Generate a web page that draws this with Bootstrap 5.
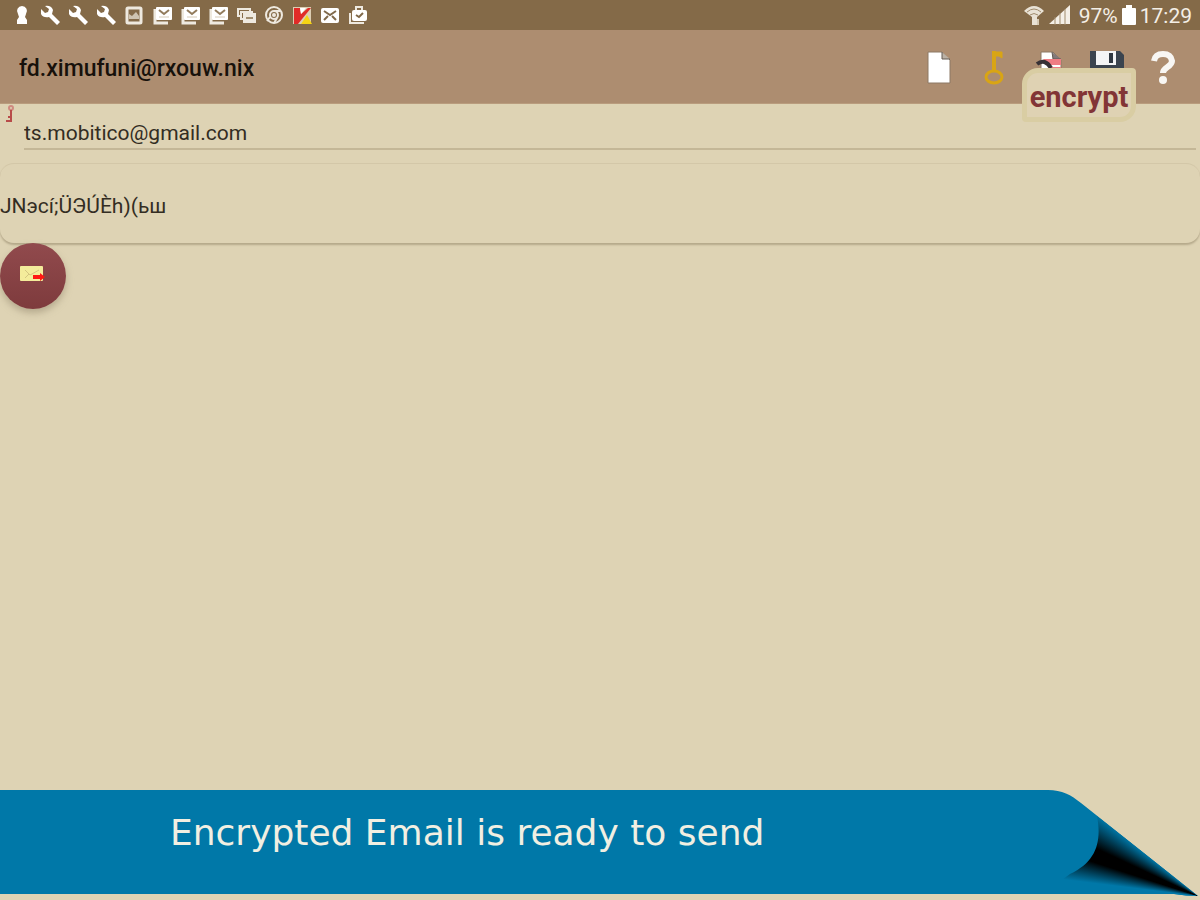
<!DOCTYPE html>
<html lang="en">
<head>
<meta charset="utf-8">
<meta name="viewport" content="width=device-width, initial-scale=1">
<title>Encrypted mail</title>
<link href="https://cdn.jsdelivr.net/npm/bootstrap@5.3.0/dist/css/bootstrap.min.css" rel="stylesheet">
<style>
  body { background: #ded3b4; color: #2b261d; font-family: Roboto, "Liberation Sans", sans-serif; }
  .status-bar { background: #846a48; color: #f4efe6; height: 30px; padding: 0 8px; font-size: 21px; line-height: 30px; }
  .status-text { padding-top: 2px; }
  .status-icons svg { width: 28px; height: 22px; }
  .app-bar { background: #ad8d70; height: 74px; padding: 0 9px 0 19px; border-bottom: 1px solid #b99c7d; }
  .app-title { font-size: 23px; font-weight: 500; line-height: 32px; color: #17110b; padding-top: 5px; }
  .tool-btn { width: 56px; height: 56px; padding: 2px 0 0; border: 0; background: none; }
  .hint { top: 38px; right: 64px; width: 114px; height: 54px; padding-top: 4px; border: 5px solid #d9cda3; border-radius: 16px 4px 16px 4px; background: #dfd2b3; color: #823536; font-size: 29px; font-weight: 700; line-height: 44px; z-index: 2; }
  .to-row { padding: 0 4px 13px 5px; height: 59px; }
  .to-row svg { width: 11px; height: 22px; flex: none; }
  .to-input { margin-left: 8px; height: 46px; padding: 13px 0 0; border: 0; border-bottom: 2px solid #c4b797; background: none; font-size: 21px; color: #332d23; outline: 0; }
  .message { height: 80px; border: 0; border-top: 1px solid #d3c7a8; border-radius: 14px; background: #ded3b4; box-shadow: 0 2px 2px #b5a98b; font-size: 21px; line-height: 32px; color: #332d23; padding-top: 4px; }
  .send-btn { width: 66px; height: 66px; border: 0; padding: 0 3px 4px 0; background: linear-gradient(#914a4d, #7e3b3d); box-shadow: 0 4px 7px #9b8f7599; }
  .banner-row { margin-bottom: 4px; }
  .banner { height: 104px; background: #0078a8; color: #f1efe2; padding-left: 170px; font-family: "DejaVu Sans", sans-serif; font-size: 36px; line-height: 86px; white-space: nowrap; }
  .banner-tail { width: 200px; height: 106px; flex: none; background: #0078a8; clip-path: path("M0 0H48C62 0 71 5 81 13L198 106Q186 106 174 104H0Z"); }
  .banner-fold { height: 106px; background: conic-gradient(from 0deg at 198px 106px, #0078a8 277deg, #000 288deg, #000 295deg, #0078a8 309deg); clip-path: path("M97 26C102 52 96 72 70 84L40 106H200Z"); }
</style>
</head>
<body>
<div class="d-flex flex-column min-vh-100">
  <div class="status-bar d-flex justify-content-between align-items-center">
    <div class="status-icons d-flex align-items-center" aria-hidden="true">
      <svg viewBox="0 0 28 22" fill="#fff"><path d="M14 2a5 5 0 0 1 4 8l-1 3 2 3v4H9v-4l2-3-1-3a5 5 0 0 1 4-8Z"/></svg>
      <svg viewBox="0 0 28 22"><use href="#wrench"/></svg>
      <svg viewBox="0 0 28 22"><use href="#wrench"/></svg>
      <svg viewBox="0 0 28 22"><use href="#wrench"/></svg>
      <svg viewBox="0 0 28 22"><rect x="7" y="4" width="14" height="15" rx="1" fill="none" stroke="#eee9df" stroke-width="3"/><path d="M9 15v-5l3 2 4-4 3 4v3Z" fill="#cfc4b1"/></svg>
      <svg viewBox="0 0 28 22"><use href="#mails"/></svg>
      <svg viewBox="0 0 28 22"><use href="#mails"/></svg>
      <svg viewBox="0 0 28 22"><use href="#mails"/></svg>
      <svg viewBox="0 0 28 22" fill="none" stroke="#eee9df" stroke-width="2"><path d="M9 12H6V5h12v2M12 15H9V8h12"/><rect x="12" y="10" width="11" height="8" fill="#eee9df"/><path d="M14 14h7" stroke="#a18e70"/></svg>
      <svg viewBox="0 0 28 22" fill="none" stroke="#eee9df" stroke-width="2"><circle cx="14" cy="11" r="8"/><circle cx="14" cy="11" r="4"/><circle cx="14" cy="11" r="1"/><path d="M14 7h7M10 13l-3 4M17 14l-3 5"/></svg>
      <svg viewBox="0 0 28 22"><path d="M5 3h18v17H5Z" fill="#dccdb2"/><path d="M6 4h6l1 6 7-6h3L10 20H6Z" fill="#e12b27"/><path d="M12 4h6l-5 6Z" fill="#fff"/><path d="m19 11 5 9H13Z" fill="#f5d414"/></svg>
      <svg viewBox="0 0 28 22"><rect x="5" y="4" width="18" height="15" rx="2" fill="#fff"/><path d="m8 7 6 4 6-4M8 16l4-4M20 16l-4-4" fill="none" stroke="#80694a" stroke-width="2"/></svg>
      <svg viewBox="0 0 28 22"><path d="M6 9v10h14" fill="none" stroke="#eee9df" stroke-width="2"/><path d="M12 6V3h6v3" fill="none" stroke="#eee9df" stroke-width="2"/><rect x="8" y="6" width="15" height="11" rx="2" fill="#fff"/><path d="m12 11 3 2 4-4" fill="none" stroke="#80694a" stroke-width="2"/></svg>
    </div>
    <div class="d-flex align-items-center">
      <svg width="22" height="24" viewBox="0 0 22 24"><path d="M1 8Q11-2 21 8L14 14V22H9V14Z" fill="#e9e2d5"/><path d="M4 9q7-6 14 0M7 12q4-3 8 0" fill="none" stroke="#a08b6d"/><path d="M15 22v-6" stroke="#d6cab5" stroke-width="2"/></svg>
      <svg class="ms-1 me-2" width="22" height="22" viewBox="0 0 22 22"><path d="M0 20 21 1v19Z" fill="#f4efe6"/><path d="M6 13v8M11 9v12M16 5v16" stroke="#a08b6d"/></svg>
      <span class="status-text">97%</span>
      <svg class="mx-1" width="14" height="20" viewBox="0 0 14 20" fill="#fff"><path d="M4 0h6v3h3a1 1 0 0 1 1 1v15a1 1 0 0 1-1 1H1a1 1 0 0 1-1-1V4a1 1 0 0 1 1-1h3Z"/></svg>
      <span class="status-text">17:29</span>
    </div>
  </div>

  <header class="app-bar d-flex align-items-center justify-content-between position-relative">
    <h1 class="app-title mb-0">fd.ximufuni@rxouw.nix</h1>
    <div class="d-flex">
      <button type="button" class="tool-btn" aria-label="New message"><svg width="28" height="36" viewBox="0 0 28 36"><path d="M3 2h14l8 8v23H3Z" fill="#fff" stroke="#8c7964"/><path d="M17 2v7h8" fill="#bbb1a5" stroke="#625b53"/></svg></button>
      <button type="button" class="tool-btn" aria-label="Keys"><svg width="28" height="38" viewBox="0 0 28 38" fill="none" stroke="#d9a514"><ellipse cx="13" cy="28" rx="8" ry="6" stroke-width="3"/><path d="M13 2v20" stroke-width="4"/><path d="M14 3h7v6l-3-2h-4" fill="#d9a514" stroke-width="1"/></svg></button>
      <button type="button" class="tool-btn" aria-label="Encrypt"><svg width="36" height="36" viewBox="0 0 36 36"><path d="M8 2h12l8 8v24H8Z" fill="#fff" stroke="#8c7964"/><path d="M19 2l1 7h8" fill="#83797a" stroke="#625b53"/><path d="M12 10h15v4H15zM17 18h11" fill="#ef7d84" stroke="#ef7d84" stroke-width="2"/><path d="M4 14q8-6 14 4" fill="none" stroke="#373135" stroke-width="4"/></svg></button>
      <button type="button" class="tool-btn" aria-label="Save"><svg width="36" height="36" viewBox="0 0 36 36"><path d="M1 1h30l4 4v30H1Z" fill="#3b444f"/><path d="M7 1h20v14H7Z" fill="#f4f5f6"/><path d="M20 3h4v10h-4Z" fill="#303842"/><path d="M6 20h24v15H6Z" fill="#fff"/></svg></button>
      <button type="button" class="tool-btn" aria-label="Help"><svg width="28" height="36" viewBox="0 0 28 36"><path d="M5 11q1-7 9-7t9 7c0 6-9 6-9 12" fill="none" stroke="#f8f6f3" stroke-width="6"/><circle cx="14" cy="30" r="4" fill="#f8f6f3"/></svg></button>
    </div>
    <div class="hint position-absolute d-flex align-items-center justify-content-center" role="tooltip">encrypt</div>
  </header>

  <main>
    <div class="to-row d-flex">
      <svg viewBox="0 0 11 22" fill="none" stroke="#b84b49" stroke-width="2" aria-hidden="true"><circle cx="6" cy="4" r="2" stroke="#cf8a80"/><path d="M6 6v11H1M6 13H3"/></svg>
      <input class="to-input flex-grow-1" type="email" aria-label="Recipient" value="ts.mobitico@gmail.com">
    </div>
    <div class="message d-flex align-items-center">JNэcí;ÜЭÚÈh)(ьш</div>
    <button type="button" class="send-btn rounded-circle d-flex align-items-center justify-content-center" aria-label="Send encrypted email">
      <svg width="28" height="20" viewBox="0 0 28 20"><rect x="2" y="2" width="23" height="15" rx="1" fill="#f4ec9b"/><path d="m7 6 5 5 2-1 7-4M7 14l4-4" fill="none" stroke="#d5c781"/><path d="M15 11h7V9l5 4-5 4v-2h-7Z" fill="#ff1712"/></svg>
    </button>
  </main>

  <footer class="banner-row d-flex mt-auto">
    <div class="banner flex-grow-1">Encrypted Email is ready to send</div>
    <div class="banner-tail" aria-hidden="true"><div class="banner-fold"></div></div>
  </footer>
</div>

<svg class="d-none" aria-hidden="true">
  <symbol id="wrench" viewBox="0 0 28 22"><path d="M5 5l4 4 3-1 1-3-4-3q6-1 8 4l-1 4 8 8-3 3-8-8q-6 1-8-3Z" fill="#fff"/></symbol>
  <symbol id="mails" viewBox="0 0 28 22"><path d="M7 5v14h13" fill="none" stroke="#eee9df" stroke-width="3"/><rect x="8" y="3" width="16" height="13" rx="1" fill="#fff"/><path d="m11 6 5 4 5-4" fill="none" stroke="#927c5d" stroke-width="2"/><path d="M11 13h10" stroke="#d6cbb8"/></symbol>
</svg>
<script src="https://cdn.jsdelivr.net/npm/bootstrap@5.3.0/dist/js/bootstrap.bundle.min.js"></script>
</body>
</html>
